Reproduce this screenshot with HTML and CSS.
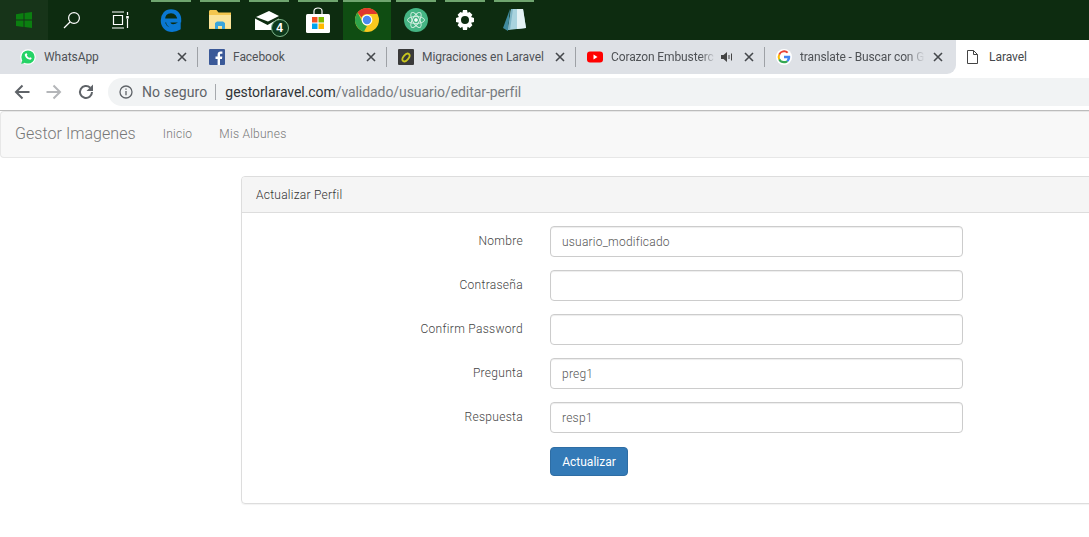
FILE: index.html
```html
<!DOCTYPE html>
<html lang="es">
<head>
<meta charset="utf-8">
<title>Laravel</title>
<link rel="stylesheet" href="styles.css">
</head>
<body>
<div class="taskbar">
  <div class="sys-cell start">
    <svg width="16" height="16" viewBox="0 0 16 16"><path fill="#0b7f10" d="M0 2.200 7.500 1v6.500H0zM8.500.9 16 0v7.500H8.500zM0 8.500h7.500V15L0 13.900zM8.500 8.500H16V16l-7.500-1z"/></svg>
  </div>
  <div class="sys-cell">
    <svg width="18" height="18" viewBox="0 0 18 18" fill="none" stroke="#fff" stroke-width="1.200"><circle cx="11" cy="7" r="5.400"/><path d="M7 11 1 17"/></svg>
  </div>
  <div class="sys-cell">
    <svg width="18" height="18" viewBox="0 0 18 18" fill="none" stroke="#fff" stroke-width="1.200"><path d="M1 1h12M1 17h12M2.500 4.500h9v9h-9z"/><path d="M16.500 1v3M16.500 8v9"/><rect x="15.200" y="5" width="2.600" height="2.600" fill="#fff" stroke="none"/></svg>
  </div>
  <div class="apps">
    <div class="app pinned">
      <svg width="22" height="24" viewBox="0 0 20 22" fill="none"><path d="M3 11.500h14.500c.3-5-2.600-8.500-7.500-8.500C5.500 3 2.500 6.500 2.500 11.500c0 5 3.500 8.500 8.500 8.500 2.500 0 4.500-.6 6-1.600v-3.200c-1.500 1-3.300 1.500-5 1.500-3 0-4.800-2-4.800-5.200" stroke="#0a78d2" stroke-width="3.800"/></svg>
    </div>
    <div class="app pinned">
      <svg width="22" height="20" viewBox="0 0 22 20"><path fill="#f3c64f" d="M0 1.500C0 .7.600 0 1.500 0h6l2 2.500H22V19H0z"/><path fill="#fbe49a" d="M0 5h22v13.500H0z"/><path fill="#3aa5dc" d="M6 19v-6l2-1.500h6l2 1.500v6h-3v-3H9v3z"/></svg>
    </div>
    <div class="app pinned">
      <span class="mail">
        <svg width="24" height="19" viewBox="0 0 24 19"><path fill="#fff" d="M1 6 14 0l10 5-11 5.500z"/><path fill="#fff" d="M0 7.500 12.500 14 24 7.500V19H0z"/></svg>
        <span class="badge">4</span>
      </span>
    </div>
    <div class="app pinned">
      <svg width="24" height="26" viewBox="0 0 24 26"><path d="M8 7V4c0-4 8-4 8 0v3" fill="none" stroke="#fff" stroke-width="1.200"/><rect y="7" width="24" height="19" rx="1.500" fill="#fff"/><path fill="#f25022" d="M6 10h5.500v5.500H6z"/><path fill="#7fba00" d="M12.500 10H18v5.500h-5.500z"/><path fill="#00a4ef" d="M6 16.500h5.500V22H6z"/><path fill="#ffb900" d="M12.500 16.500H18V22h-5.500z"/></svg>
    </div>
    <div class="app pinned active">
      <svg width="24" height="24" viewBox="0 0 24 24"><circle cx="12" cy="12" r="12" fill="#f9c81e"/><path fill="#e0382d" d="M12 0a12 12 0 0 1 10.400 6H12a6 6 0 0 0-5.400 3.400L2.600 4.500A12 12 0 0 1 12 0z"/><path fill="#2fa34a" d="M2.600 4.500 7.500 14a6 6 0 0 0 4.500 4l-3 5.600A12 12 0 0 1 2.600 4.500z"/><circle cx="12" cy="12" r="5.400" fill="#fff"/><circle cx="12" cy="12" r="4.200" fill="#4a8af0"/></svg>
    </div>
    <div class="app pinned">
      <svg width="24" height="24" viewBox="0 0 24 24" fill="none" stroke="#d8f0e4" stroke-width=".9"><circle cx="12" cy="12" r="12" fill="#45b584" stroke="none"/><ellipse cx="12" cy="12" rx="8.500" ry="3.500" transform="rotate(60 12 12)"/><ellipse cx="12" cy="12" rx="8.500" ry="3.500" transform="rotate(-60 12 12)"/><ellipse cx="12" cy="12" rx="8.500" ry="3.500"/><circle cx="12" cy="12" r="1.500" fill="#fff"/></svg>
    </div>
    <div class="app pinned">
      <svg width="20" height="20" viewBox="0 0 20 20"><path fill="#fff" fill-rule="evenodd" d="M8 0h4l.6 2.800 2-.8 2.800 2.800-1.300 2.200L19 8v4l-2.900.7 1.300 2.500-2.800 2.800-2-1.300L12 20H8l-.6-3.300-2 1.300-2.800-2.800 1.300-2.500L1 12V8l2.900-1-1.300-2.200L5.400 2l2 .8zM10 6a4 4 0 1 0 0 8 4 4 0 0 0 0-8z"/></svg>
    </div>
    <div class="app pinned">
      <svg width="24" height="24" viewBox="0 0 24 24"><path fill="#3f8a9e" d="M8 1 1 20l5 3z"/><path fill="#a9d3de" d="M9 1h12l3 19-18 2z"/><path fill="#e4f2f5" d="M15 1h6l3 19-9 1z"/><path fill="#7fb6c6" d="M9 1h2L8 22H6z"/></svg>
    </div>
  </div>
</div>

<div class="tabstrip">
  <div class="tabs">
    <div class="tab">
      <svg class="fav" width="16" height="16" viewBox="0 0 16 16"><circle cx="8" cy="8" r="7.800" fill="#fff"/><circle cx="8" cy="8" r="6.600" fill="#25d366"/><path d="M1.200 15l1.200-4 2.700 2.800z" fill="#25d366"/><path fill="#fff" d="M5.700 4.500c.5-.4 1-.3 1.200.2l.5 1.100-.6.800c.5 1 1.300 1.800 2.400 2.300l.8-.7 1.300.6c.4.200.4.600.2 1-.4.800-1.300 1-2.100.8-2.200-.6-3.800-2.200-4.500-4.200-.2-.8 0-1.400.8-1.900z"/></svg>
      <span class="tab-title">WhatsApp</span>
      <svg class="tab-x" width="12" height="12" viewBox="0 0 12 12"><path d="M2 2l8 8M10 2l-8 8"/></svg>
    </div>
    <div class="tab">
      <svg class="fav" width="16" height="16" viewBox="0 0 16 16"><rect width="16" height="16" rx="1" fill="#3b5998"/><path fill="#fff" d="M11 16v-6h2l.3-2.500H11V6c0-.7.200-1.200 1.200-1.200h1.200V2.600c-.2 0-1-.1-1.800-.1-1.800 0-3 1.100-3 3.100v1.900H6.500V10h2.100v6z"/></svg>
      <span class="tab-title">Facebook</span>
      <svg class="tab-x" width="12" height="12" viewBox="0 0 12 12"><path d="M2 2l8 8M10 2l-8 8"/></svg>
    </div>
    <div class="tab">
      <svg class="fav" width="16" height="16" viewBox="0 0 16 16"><rect width="16" height="16" rx="1" fill="#3a3a3a"/><ellipse cx="8" cy="8.500" rx="4.500" ry="2.600" transform="rotate(-50 8 8.500)" fill="none" stroke="#c9c61e" stroke-width="1.800"/></svg>
      <span class="tab-title">Migraciones en Laravel</span>
      <svg class="tab-x" width="12" height="12" viewBox="0 0 12 12"><path d="M2 2l8 8M10 2l-8 8"/></svg>
    </div>
    <div class="tab">
      <svg class="fav" width="16" height="16" viewBox="0 0 16 16"><rect y="2.500" width="16" height="11" rx="3" fill="#f00"/><path fill="#fff" d="m6.500 5.500 4 2.500-4 2.500z"/></svg>
      <span class="tab-title fade short">Corazon Embusterc</span>
      <svg class="speaker" width="12" height="10" viewBox="0 0 12 10"><path fill="#444" d="M0 3h2.500L6 0v10L2.500 7H0z"/><path d="M8 3v4M10.500 1.500v7" stroke="#444" fill="none"/></svg>
      <svg class="tab-x" width="12" height="12" viewBox="0 0 12 12"><path d="M2 2l8 8M10 2l-8 8"/></svg>
    </div>
    <div class="tab last">
      <svg class="fav" width="16" height="16" viewBox="0 0 16 16"><circle cx="8" cy="8" r="8" fill="#fff"/><path fill="#ea4335" d="M8 3.200c1.300 0 2.300.5 3 1.100l1.400-1.400A6.300 6.300 0 0 0 2.400 5l1.700 1.300A4 4 0 0 1 8 3.200z"/><path fill="#fbbc05" d="M4.100 6.300 2.400 5a6.400 6.400 0 0 0 0 6l1.700-1.300a4 4 0 0 1 0-3.400z"/><path fill="#34a853" d="M8 14.300c1.700 0 3.100-.6 4.200-1.600l-1.700-1.300c-.6.400-1.400.7-2.500.7a4 4 0 0 1-3.900-2.400L2.400 11A6.300 6.300 0 0 0 8 14.300z"/><path fill="#4285f4" d="M14.200 8c0-.5 0-.9-.1-1.300H8v2.500h3.500c-.2.900-.5 1.600-1 2.200l1.700 1.300c1.300-1.100 2-2.800 2-4.700z"/></svg>
      <span class="tab-title fade">translate - Buscar con G</span>
      <svg class="tab-x" width="12" height="12" viewBox="0 0 12 12"><path d="M2 2l8 8M10 2l-8 8"/></svg>
    </div>
  </div>
  <div class="tab-active">
    <svg class="fav" width="11" height="14" viewBox="0 0 11 14" fill="none" stroke="#444"><path d="M.5.500h6l4 4v9H.5zM6.500.500v4h4"/></svg>
    <span class="tab-title">Laravel</span>
  </div>
</div>

<div class="toolbar">
  <div class="nav-btns">
    <svg width="16" height="16" viewBox="0 0 16 16" fill="none" stroke="#5f6368" stroke-width="2"><path d="M15.500 8H2M8.500 1.500 2 8l6.500 6.500"/></svg>
    <svg width="16" height="16" viewBox="0 0 16 16" fill="none" stroke="#b4b6b9" stroke-width="2"><path d="M.5 8H14M7.500 1.500 14 8l-6.500 6.500"/></svg>
    <svg width="16" height="16" viewBox="0 0 16 16" fill="none" stroke="#5f6368" stroke-width="2"><path d="M14 8a6 6 0 1 1-1.800-4.300"/><path fill="#5f6368" stroke="none" d="M15 .5V7H8.500z"/></svg>
  </div>
  <div class="omnibox">
    <svg class="info" width="14" height="14" viewBox="0 0 14 14" fill="none" stroke="#5f6368" stroke-width="1.300"><circle cx="7" cy="7" r="6"/><path d="M7 6v4.200M7 3.500v1.300"/></svg>
    <span class="secure">No seguro</span>
    <span class="url"><span class="host">gestorlaravel.com</span>/validado/usuario/editar-perfil</span>
  </div>
</div>

<nav class="navbar">
  <a class="brand">Gestor Imagenes</a>
  <a class="nav-link">Inicio</a>
  <a class="nav-link">Mis Albunes</a>
</nav>

<main class="panel">
  <div class="panel-heading">Actualizar Perfil</div>
  <form class="panel-body">
    <div class="row"><label class="lbl">Nombre</label><input class="field" value="usuario_modificado"></div>
    <div class="row"><label class="lbl">Contraseña</label><input class="field"></div>
    <div class="row"><label class="lbl">Confirm Password</label><input class="field"></div>
    <div class="row"><label class="lbl">Pregunta</label><input class="field" value="preg1"></div>
    <div class="row"><label class="lbl">Respuesta</label><input class="field" value="resp1"></div>
    <div class="row"><span class="lbl"></span><button class="btn" type="button">Actualizar</button></div>
  </form>
</main>
</body>
</html>
```

FILE: styles.css
```css
* { box-sizing: border-box; }
html, body { margin: 0; height: 537px; overflow: hidden; background: #fff; }
body { font-family: Roboto, "Liberation Sans", sans-serif; font-size: 12px; color: #636b6f; width: 1089px; }

.taskbar { height: 40px; display: flex; background: #0d2c10; }
.sys-cell { width: 48px; display: flex; align-items: center; justify-content: center; }
.start { background: #173419; }
.apps { display: flex; gap: 1px; margin-left: 3px; }
.app { width: 48px; display: flex; align-items: center; justify-content: center; position: relative; }
.pinned::before { content: ""; position: absolute; top: 0; left: 4px; right: 4px; height: 2px; background: #6fa56f; }
.active { background: #0f4d12; }
.active::before { left: 0; right: 0; }
.mail { position: relative; display: flex; margin-left: -5px; }
.badge { position: absolute; right: -10px; bottom: -7px; width: 18px; height: 18px; border-radius: 50%; background: #0d3a1c; border: 1px solid #7fb58a; color: #fff; font: bold 12px/16px "Liberation Sans", sans-serif; text-align: center; }

.tabstrip { height: 38px; display: flex; background: #fff; }
.tabs { width: 956px; height: 34px; padding-left: 8px; display: flex; background: #dee1e6; border-bottom-right-radius: 9px; }
.tab { width: 189px; flex: none; display: flex; align-items: center; padding-left: 12px; position: relative; color: #4f5256; }
.tab::after { content: ""; position: absolute; right: -1px; top: 7px; bottom: 7px; width: 1px; background: #9ea1a6; }
.tab.last::after { display: none; }
.tab .fav { flex: none; }
.tab-title { margin-left: 8px; font-size: 12px; white-space: nowrap; overflow: hidden; flex: 1; min-width: 0; letter-spacing: -.05px; }
.fade { letter-spacing: -.12px; -webkit-mask-image: linear-gradient(to right, #000 85%, transparent); mask-image: linear-gradient(to right, #000 85%, transparent); }
.short { margin-right: 5px; }
.speaker { flex: none; margin-right: 3px; }
.tab-x { flex: none; margin: 0 9px 0 7px; fill: none; stroke: #45484c; stroke-width: 1.600; }
.tab-active { flex: 1; height: 34px; display: flex; align-items: center; padding-left: 11px; color: #45484c; }
.tab-active .tab-title { margin-left: 11px; }

.toolbar { height: 33px; display: flex; background: #fff; align-items: flex-start; border-bottom: 1px solid #bcbcbc; }
.nav-btns { width: 108px; height: 28px; display: flex; align-items: center; gap: 16px; padding-left: 14px; }
.omnibox { flex: 1; height: 28px; display: flex; align-items: center; padding-left: 11px; background: #f1f3f4; border-radius: 14px 0 0 14px; font-size: 14px; }
.info { flex: none; margin-right: 9px; }
.secure { color: #5f6368; padding-right: 8px; margin-right: 9px; border-right: 1px solid #a6a9ad; line-height: 16px; letter-spacing: .12px; }
.url { color: #777b80; letter-spacing: -.07px; }
.host { color: #303337; }

.navbar { height: 47px; display: flex; align-items: center; padding: 0 0 2px 14px; background: #f8f8f8; border: 1px solid #e7e7e7; border-right: 0; border-radius: 4px 0 0 4px; }
.brand { font-size: 16px; font-weight: 300; color: #777; margin: 0 27px 1px 0; letter-spacing: .05px; }
.nav-link { color: #777; font-size: 12px; font-weight: 300; margin-right: 27px; letter-spacing: .25px; }

.panel { margin: 18px 0 0 241px; width: 900px; height: 328px; border: 1px solid #ddd; border-radius: 4px; box-shadow: 0 1px 1px rgba(0, 0, 0, .05); }
.panel-heading { height: 36px; padding-left: 14px; line-height: 36px; font-size: 12px; font-weight: 300; letter-spacing: .25px; color: #333; background: #f5f5f5; border-bottom: 1px solid #ddd; border-radius: 3px 3px 0 0; }
.panel-body { padding-top: 13px; display: flex; flex-direction: column; gap: 13px; }
.row { display: flex; align-items: center; gap: 27px; }
.lbl { width: 281px; text-align: right; font-size: 12px; font-weight: 300; letter-spacing: .3px; color: #444; line-height: 31px; }
.field { width: 413px; height: 31px; padding: 0 11px; border: 1px solid #ccc; border-radius: 4px; font: 300 12px Roboto, sans-serif; letter-spacing: .22px; color: #555; box-shadow: inset 0 1px 1px rgba(0, 0, 0, .075); }
.btn { width: 78px; height: 29px; margin-top: 1px; padding: 0; border: 1px solid #2e6da4; border-radius: 4px; background: #337ab7; color: #fff; font: 12px Roboto, sans-serif; }
```
